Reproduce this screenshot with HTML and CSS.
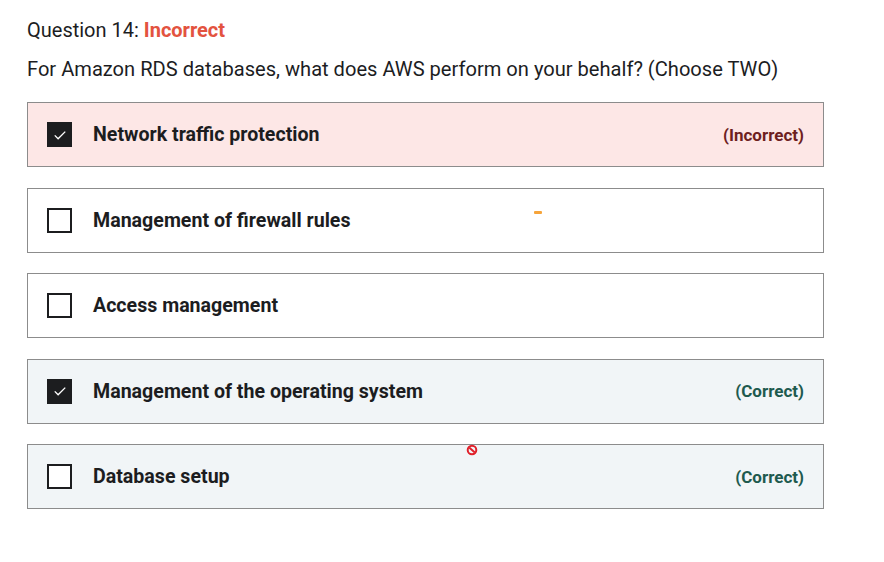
FILE: index.html
```html
<!DOCTYPE html>
<html>
<head>
<meta charset="utf-8">
<link rel="stylesheet" href="styles.css">
</head>
<body>
<div class="page">
  <div class="qtitle">Question 14: <span class="bad">Incorrect</span></div>
  <div class="qtext">For Amazon RDS databases, what does AWS perform on your behalf? (Choose TWO)</div>
  <div class="options">
    <div class="opt opt-wrong">
      <span class="box checked"><svg viewBox="0 0 24 24" width="18" height="18"><path d="M5 12.5l4.5 4.5L19 7.5" fill="none" stroke="#fff" stroke-width="1.8"/></svg></span>
      <span class="label">Network traffic protection</span>
      <span class="tag tag-wrong">(Incorrect)</span>
    </div>
    <div class="opt">
      <span class="box"></span>
      <span class="label">Management of firewall rules</span>
      <span class="dash"></span>
    </div>
    <div class="opt">
      <span class="box"></span>
      <span class="label">Access management</span>
    </div>
    <div class="opt opt-right">
      <span class="box checked"><svg viewBox="0 0 24 24" width="18" height="18"><path d="M5 12.5l4.5 4.5L19 7.5" fill="none" stroke="#fff" stroke-width="1.8"/></svg></span>
      <span class="label">Management of the operating system</span>
      <span class="tag tag-right">(Correct)</span>
    </div>
    <div class="opt opt-right">
      <span class="box"></span>
      <span class="label">Database setup</span>
      <span class="tag tag-right">(Correct)</span>
      <svg class="nocursor" viewBox="0 0 12 12" width="12" height="12"><circle cx="6" cy="6" r="4.3" fill="none" stroke="#e0202a" stroke-width="2"/><path d="M3.2 3.6l5.6 4.8" stroke="#e0202a" stroke-width="2"/></svg>
    </div>
  </div>
</div>
</body>
</html>
```
FILE: styles.css
```css
html, body { margin: 0; padding: 0; background: #fff; }
body { font-family: Roboto, "Liberation Sans", sans-serif; color: #1c1d1f; }
.page { padding: 18px 0 0 27px; width: 797px; }
.qtitle { font-size: 20px; line-height: 24px; }
.bad { color: #e3533f; font-weight: 700; }
.qtext { font-size: 20.1px; line-height: 24px; margin-top: 15px; }
.options { display: flex; flex-direction: column; gap: 20.5px; margin-top: 21px; }
.opt {
  position: relative;
  height: 63px;
  border: 1px solid #8c8c8c;
  background: #fff;
  display: flex; align-items: center;
  padding: 0 19px 0 19px;
}
.opt-wrong { background: #fde7e6; }
.opt-right { background: #f1f5f7; }
.box {
  width: 21px; height: 21px; border: 2px solid #1c1d1f; background: #fff;
  display: flex; align-items: center; justify-content: center; flex: none;
}
.box.checked { background: #1c1d1f; }
.label { font-weight: 700; font-size: 19.6px; margin-left: 21px; flex: 1; }
.tag { font-weight: 700; font-size: 17px; }
.tag-wrong { color: #6e1f1f; }
.tag-right { color: #1e5a4e; }
.dash { position: absolute; left: 506px; top: 22px; width: 8px; height: 3px; background: #f6a43a; border-radius: 1px; }
.nocursor { position: absolute; left: 438px; top: -1px; }
```
